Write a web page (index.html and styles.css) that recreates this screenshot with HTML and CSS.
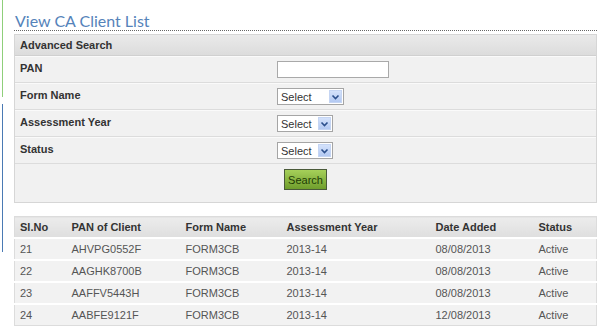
FILE: index.html
```html
<!DOCTYPE html>
<html lang="en">
    <head>
        <meta charset="utf-8"/>
        <title>View CA Client List</title>
        <link rel="stylesheet" href="styles.css">
    </head>
    <body>
        <div class="rail">
            <div class="rail-green"></div>
            <div class="rail-blue"></div>
        </div>

        <div class="main">
            <h1 class="title">View CA Client List</h1>

            <div class="search-box">
                <div class="search-head">Advanced Search</div>

                <div class="search-row">
                    <label>PAN</label>
                    <span class="text-input"></span>
                </div>
                <div class="search-row">
                    <label>Form Name</label>
                    <span class="select wide">Select<span class="arrow"><svg width="9" height="6" viewBox="0 0 9 6"><path d="M1.5 1.5 L4.5 4.5 L7.5 1.5" fill="none" stroke="#2b4f8c" stroke-width="1.6"/></svg></span></span>
                </div>
                <div class="search-row">
                    <label>Assessment Year</label>
                    <span class="select">Select<span class="arrow"><svg width="9" height="6" viewBox="0 0 9 6"><path d="M1.5 1.5 L4.5 4.5 L7.5 1.5" fill="none" stroke="#2b4f8c" stroke-width="1.6"/></svg></span></span>
                </div>
                <div class="search-row">
                    <label>Status</label>
                    <span class="select">Select<span class="arrow"><svg width="9" height="6" viewBox="0 0 9 6"><path d="M1.5 1.5 L4.5 4.5 L7.5 1.5" fill="none" stroke="#2b4f8c" stroke-width="1.6"/></svg></span></span>
                </div>
                <div class="search-actions">
                    <button class="search-btn">Search</button>
                </div>
            </div>

            <table class="client-table">
                <colgroup>
                    <col style="width:52px">
                    <col style="width:114px">
                    <col style="width:101px">
                    <col style="width:149px">
                    <col style="width:103px">
                    <col>
                </colgroup>
                <thead>
                    <tr>
                        <th>Sl.No</th>
                        <th>PAN of Client</th>
                        <th>Form Name</th>
                        <th>Assessment Year</th>
                        <th>Date Added</th>
                        <th>Status</th>
                    </tr>
                </thead>
                <tbody>
                    <tr><td>21</td><td>AHVPG0552F</td><td>FORM3CB</td><td>2013-14</td><td>08/08/2013</td><td>Active</td></tr>
                    <tr><td>22</td><td>AAGHK8700B</td><td>FORM3CB</td><td>2013-14</td><td>08/08/2013</td><td>Active</td></tr>
                    <tr><td>23</td><td>AAFFV5443H</td><td>FORM3CB</td><td>2013-14</td><td>08/08/2013</td><td>Active</td></tr>
                    <tr><td>24</td><td>AABFE9121F</td><td>FORM3CB</td><td>2013-14</td><td>12/08/2013</td><td>Active</td></tr>
                </tbody>
            </table>
        </div>
    </body>
</html>
```

FILE: styles.css
```css
*{margin:0;padding:0;box-sizing:border-box;}

body{
    display: flex;
    width: 600px;
    height: 326px;
    overflow: hidden;
    background: white;
    font-family: "Liberation Sans", Arial, sans-serif;
    font-size: 11px;
    color: #444;
}

.rail{
    width: 14px;
    flex-shrink: 0;
    padding-left: 2px;
}

.rail-green{
    height: 97px;
    border-left: 1px solid #8fcf7a;
}

.rail-blue{
    height: 148px;
    margin-top: 7px;
    border-left: 1px solid #4a7ab4;
}

.main{
    width: 583px;
}

.title{
    height: 31px;
    padding-top: 12px;
    padding-left: 1px;
    border-bottom: 1px dotted #666;
    font-family: "Lato", "DejaVu Sans", sans-serif;
    font-weight: normal;
    font-size: 16px;
    line-height: 18px;
    color: #5583ba;
}

.search-box{
    margin-top: 3px;
    border: 1px solid #d6d6d6;
    background: #f1f1f1;
}

.search-head{
    height: 21px;
    padding: 4px 5px 0;
    background: linear-gradient(#eaeaea, #dcdcdc);
    border-bottom: 1px solid #d0d0d0;
    font-weight: bold;
    color: #333;
}

.search-row{
    display: flex;
    align-items: center;
    height: 27px;
    border-bottom: 1px solid #dcdcdc;
    border-top: 1px solid #fafafa;
}

.search-row label{
    width: 262px;
    padding: 0 0 3px 5px;
    font-weight: bold;
    color: #333;
}

.text-input{
    width: 112px;
    height: 17px;
    border: 1px solid #a9a9a9;
    background: white;
}

.select{
    display: flex;
    align-items: center;
    justify-content: space-between;
    width: 56px;
    height: 17px;
    padding: 0 1px 0 3px;
    border: 1px solid #a5a5a5;
    background: white;
    color: #333;
    font-size: 11px;
}

.select.wide{
    width: 67px;
}

.arrow{
    display: flex;
    align-items: center;
    justify-content: center;
    width: 13px;
    height: 13px;
    background: linear-gradient(#d4e2fb, #b3c9f2);
    border: 1px solid #c5d5f3;
}

.search-actions{
    height: 38px;
    padding: 5px 0 0 269px;
}

.search-btn{
    width: 43px;
    height: 21px;
    border: 1px solid #4a5a3a;
    background: linear-gradient(#a6d05a, #6f9e2c);
    color: #213d05;
    font-family: "Liberation Sans", Arial, sans-serif;
    font-size: 11px;
}

.client-table{
    width: 583px;
    margin-top: 13px;
    border-collapse: collapse;
    table-layout: fixed;
    border: 1px solid #dcdcdc;
}

.client-table th{
    height: 21px;
    padding-left: 5px;
    text-align: left;
    background: linear-gradient(#ececec, #dedede);
    color: #333;
}

.client-table td{
    height: 22px;
    padding-left: 5px;
    background: #f2f2f2;
    border-top: 2px solid white;
    color: #555;
}
```
